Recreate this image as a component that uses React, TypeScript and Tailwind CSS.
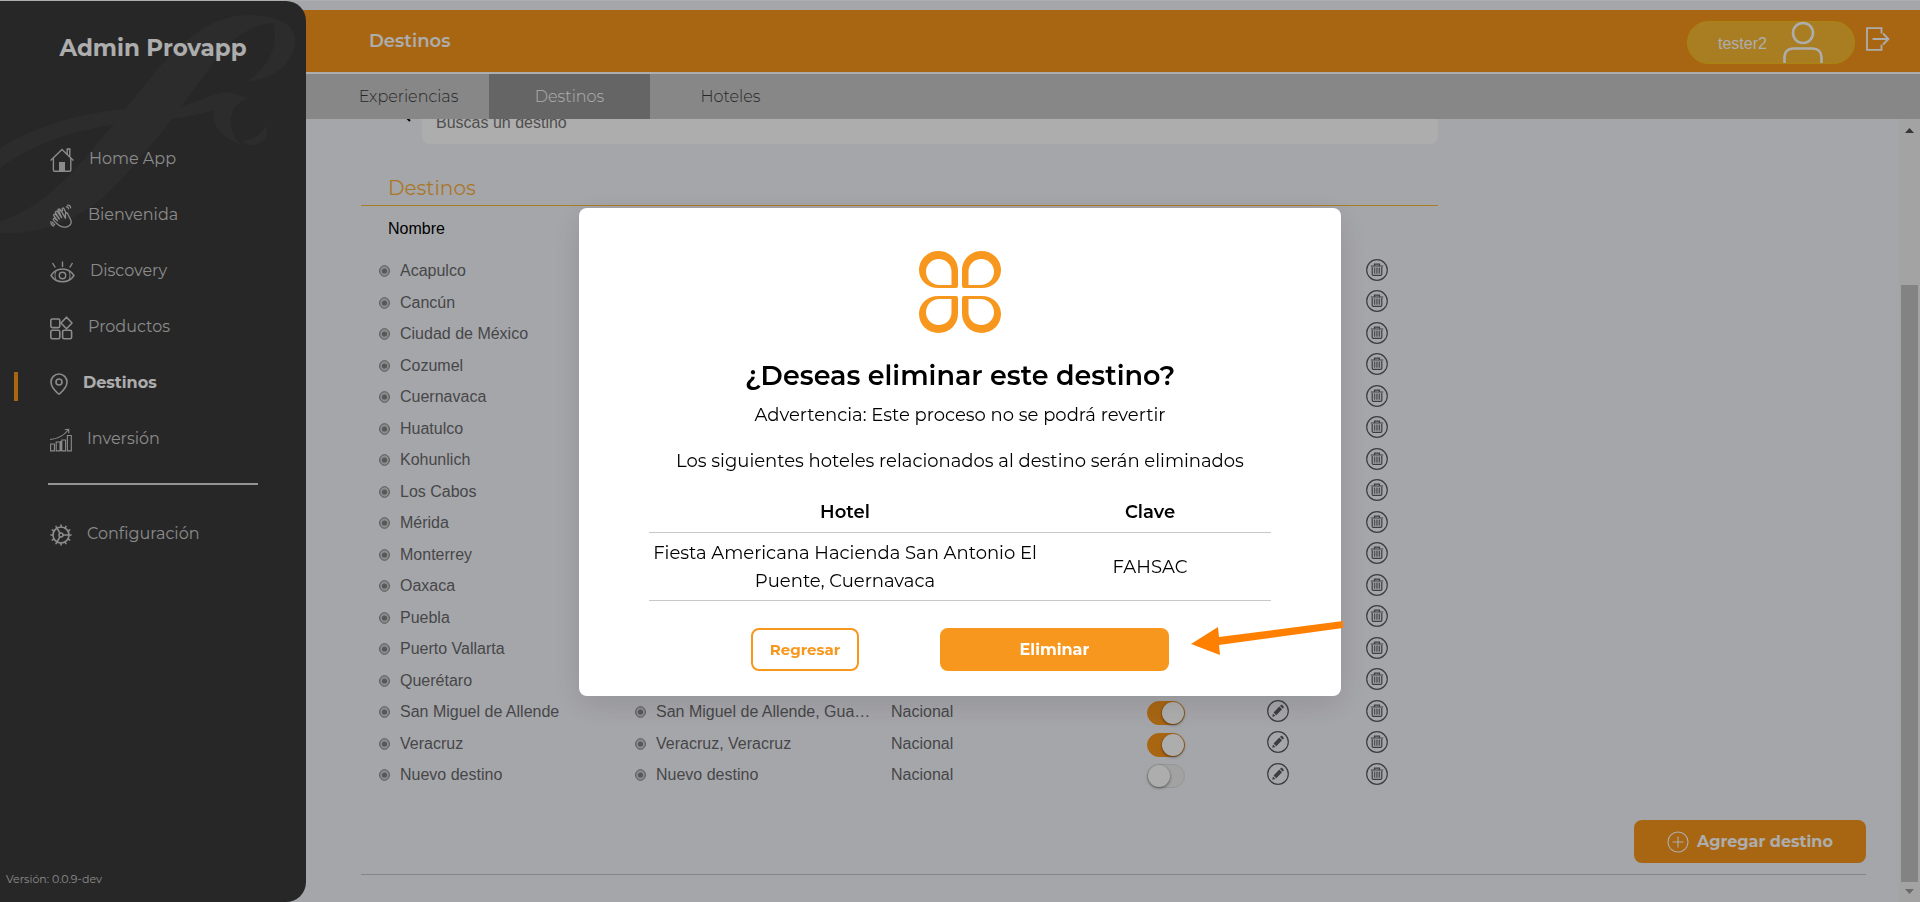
import { useState } from "react";
import { Cog, MapPin } from "lucide-react";

const HomeIcon = () => (
  <svg width="24" height="24" viewBox="0 0 24 24" fill="none" stroke="currentColor" strokeWidth="1.4">
    <path d="M.6 12.4 12 1.4l11.4 11" />
    <path d="M17.2 6.2V1h2.6v7.6" />
    <path d="M3.4 10v12c0 .8.4 1.2 1.2 1.2h15c.8 0 1.2-.4 1.2-1.2V10" />
    <path d="M9 14h6v9H9z" fill="currentColor" stroke="none" />
  </svg>
);

const HandIcon = () => (
  <svg width="23" height="24" viewBox="0 0 23 24" fill="none" stroke="currentColor" strokeWidth="1.3" strokeLinejoin="round" strokeLinecap="round">
    <path d="M8.500 21C6.500 19.500 4.800 17.800 3.600 16c-.8-1.400.8-2.300 1.700-1.300l2.200 2.200-3.500-4.900c-.9-1.400.8-2.500 1.800-1.300l3.600 4.300-3.700-5.900c-.8-1.400 1-2.500 1.900-1.200l4 5.700-2.600-6c-.7-1.500 1.200-2.400 2-1l4.400 7.600c.3-1.500-.3-3.500.2-4.700.5-1.100 2.100-.9 2.300.5.300 2.200 3.300 4.800 3.300 8C21.200 22.500 14 25.200 8.500 21z" />
    <path d="M9.200 9.200 8 6.400c-.4-1.400 1.200-2.100 1.900-.9l1 1.800M12.600 6.800l-.5-1.600c-.2-1.300 1.300-1.700 1.900-.5l2.200 4.500" />
    <path d="M16.400 2.800c1-.2 2 .7 2.100 1.900M17.600 1.100c1.700-.2 2.900 1 3 2.700" />
    <path d="M2.600 18.200c.2 1.300.9 2.100 2 2.500M1 17.600c-.2 2.400.9 3.900 2.800 4.500" />
  </svg>
);

const EyeIcon = () => (
  <svg width="25" height="24" viewBox="0 0 25 24" fill="none" stroke="currentColor" strokeWidth="1.4">
    <path d="M1 15.500C4 10.800 8 9 12.500 9s8.500 1.800 11.500 6.500c-3 4.700-7 6.300-11.500 6.300S4 20.200 1 15.500z" />
    <path d="M6.500 10.500c-2 3-2 7 0 10M18.500 10.500c2 3 2 7 0 10" strokeWidth="1" />
    <circle cx="12.500" cy="15.500" r="3.200" />
    <path d="M12.500 1.500v5.500M2.500 3l2.800 4.500M22.500 3l-2.800 4.500" />
  </svg>
);

const GridIcon = () => (
  <svg width="23" height="24" viewBox="0 0 23 24" fill="none" stroke="currentColor" strokeWidth="1.600">
    <rect x=".8" y="3" width="9" height="8.600" rx="1.500" />
    <rect x=".8" y="14.200" width="9" height="8.600" rx="1.500" />
    <rect x="12.600" y="14.200" width="9" height="8.600" rx="1.500" />
    <path d="M16.500 1.200 22 7l-5.500 5.800L11 7z" strokeLinejoin="round" />
  </svg>
);

const ChartIcon = () => (
  <svg width="22" height="24" viewBox="0 0 22 24" fill="none" stroke="currentColor" strokeWidth="1.100">
    <path d="M.6 16h3.800v6.900H.6zM6.200 14H10v8.900H6.200zM11.800 12h3.800v10.900h-3.800zM17.400 7.500h3.900v15.400h-3.900z" />
    <path d="M11 13v10" strokeWidth="2" />
    <path d="M0 11.500c8-.5 13.500-3.500 18.200-9.500M14.800 1.700l3.900-.4.100 3.900" />
  </svg>
);

const menu = [
  { label: "Home App", icon: <HomeIcon /> },
  { label: "Bienvenida", icon: <HandIcon /> },
  { label: "Discovery", icon: <EyeIcon /> },
  { label: "Productos", icon: <GridIcon /> },
  { label: "Destinos", icon: <svg width="18" height="24" viewBox="3 1 18 22"><MapPin size={24} strokeWidth={1.6} /></svg>, active: true },
  { label: "Inversión", icon: <ChartIcon /> },
];

const tabs = ["Experiencias", "Destinos", "Hoteles"];

const destinos = [
  { nombre: "Acapulco", activo: true },
  { nombre: "Cancún", activo: true },
  { nombre: "Ciudad de México", activo: true },
  { nombre: "Cozumel", activo: true },
  { nombre: "Cuernavaca", activo: true },
  { nombre: "Huatulco", activo: true },
  { nombre: "Kohunlich", activo: true },
  { nombre: "Los Cabos", activo: true },
  { nombre: "Mérida", activo: true },
  { nombre: "Monterrey", activo: true },
  { nombre: "Oaxaca", activo: true },
  { nombre: "Puebla", activo: true },
  { nombre: "Puerto Vallarta", activo: true },
  { nombre: "Querétaro", activo: true },
  { nombre: "San Miguel de Allende", lugar: "San Miguel de Allende, Gua…", tipo: "Nacional", activo: true },
  { nombre: "Veracruz", lugar: "Veracruz, Veracruz", tipo: "Nacional", activo: true },
  { nombre: "Nuevo destino", lugar: "Nuevo destino", tipo: "Nacional", activo: false },
];

const Bullet = () => (
  <svg className="mr-2.5 shrink-0" width="11" height="12" viewBox="0 0 11 12">
    <ellipse cx="5.500" cy="6" rx="4.900" ry="5.300" fill="#cfcfd2" stroke="#7d7d7f" />
    <circle cx="5.500" cy="6" r="2.600" fill="#828284" />
  </svg>
);

const PencilIcon = () => (
  <svg width="22" height="22" viewBox="0 0 22 22" fill="none" stroke="currentColor">
    <circle cx="11" cy="11" r="10.300" strokeWidth="1.200" />
    <g fill="currentColor" stroke="none">
      <path d="m6.600 12.600 5.700-6 2.700 2.700-5.700 6z" />
      <path d="m13 5.900.9-.9c.4-.4.900-.4 1.300 0l1.400 1.400c.4.400.4.900 0 1.300l-.9.900z" />
      <path d="m6 13.400 2.500 2.500-3.200.9z" />
    </g>
  </svg>
);

const TrashIcon = () => (
  <svg width="22" height="22" viewBox="0 0 22 22" fill="none" stroke="currentColor">
    <circle cx="11" cy="11" r="10.300" strokeWidth="1.200" />
    <path d="M4.800 7h12.400M8.500 6.800V5.200h5v1.600" strokeWidth="1.200" />
    <path d="M6.200 8v7.200c0 .7.400 1.100 1.100 1.100h7.400c.7 0 1.100-.4 1.100-1.100V8" strokeWidth="1.200" />
    <path d="M8.400 8.500v6.200M10.200 8.500v6.200M11.900 8.500v6.200M13.600 8.500v6.200" strokeWidth=".9" />
  </svg>
);

const Petal = ({ transform }: { transform?: string }) => (
  <path
    transform={transform}
    fillRule="evenodd"
    d="M19.500 0C30.500 0 39 8.500 39 19.500V35a2 2 0 0 1-2 2H19.500C8.500 37 0 29.500 0 19 0 8.500 8.500 0 19.500 0zM19.500 8C13 8 7 13.500 7 20.500 7 28.500 13 34 20.500 34H32.500V20.500C32.500 13.500 27 8 19.500 8z"
  />
);

function Sidebar() {
  return (
    <aside className="relative z-10 flex w-[306px] shrink-0 flex-col overflow-hidden rounded-r-[20px] bg-[#3a3a3a] text-[#cdcdcd]">
      <svg className="absolute left-0 top-0" width="306" height="240" viewBox="0 0 306 240" fill="#424242" aria-hidden="true">
        <path d="M0 221C58 200 92 148 125 109C158 68 194 14 250 14C278 15 295 24 295 38C295 62 274 79 247 80C268 68 280 44 273 22C246 24 226 42 206 72C180 106 150 150 110 190C72 226 32 233 0 232z" />
        <path d="M0 147C40 123 82 112 126 108L112 124C68 130 28 146 0 167z" />
        <path d="M177 106C200 101 214 92 228 91L248 97C226 104 226 132 241 143C222 138 211 124 214 109C200 113 184 117 166 118z" />
        <path d="M241 140C255 139 263 132 266 124C270 136 262 145 250 144z" />
      </svg>
      <h1 className="relative mt-[27px] text-center text-[23px] leading-10 font-bold text-white">Admin Provapp</h1>
      <nav className="relative mt-[63px] flex flex-col">
        {menu.map((item) => (
          <a key={item.label} href="#" className="relative flex h-14 items-center gap-[15px] pl-[50px]">
            {item.active && <span className="absolute left-[14px] top-[17px] h-[29px] w-1 bg-[#f8971d]" />}
            <span className="pt-0.5">{item.icon}</span>
            <span className={item.active ? "pb-px text-[16px] font-bold text-white" : "pb-px text-[16px]"}>{item.label}</span>
          </a>
        ))}
        <hr className="mt-4 mr-12 ml-12 border-t-2 border-[#dcdcdc]" />
        <a href="#" className="mt-[21px] flex h-14 items-center gap-3.5 pl-[49px]">
          <span className="pt-0.5"><Cog size={24} strokeWidth={1.6} /></span>
          <span className="text-[16px]">Configuración</span>
        </a>
      </nav>
      <p className="mt-auto pb-[15px] pl-[6px] text-[11px] leading-4">Versión: 0.0.9-dev</p>
    </aside>
  );
}

function Header() {
  return (
    <header className="flex h-[62px] shrink-0 items-center bg-[#f8971d] pr-[30px] pl-[83px] text-white">
      <h2 className="flex-1 text-[18px] font-semibold">Destinos</h2>
      <button className="mt-0.5 flex h-[43px] w-[168px] items-center gap-4 rounded-full border border-[#f8c516] bg-[#fab932] pl-[30px] font-['Liberation_Sans',sans-serif] text-[16px]">
        <span className="pt-1">tester2</span>
        <svg width="40" height="42" viewBox="0 0 40 42" fill="none" stroke="currentColor" strokeWidth="2.600">
          <circle cx="20" cy="12" r="10" />
          <path d="M1.500 42v-5.500c0-5.500 3.500-9 9-9h19c5.500 0 9 3.500 9 9V42" />
        </svg>
      </button>
      <button className="ml-[11px] pb-1" aria-label="Salir">
        <svg width="24" height="24" viewBox="0 0 24 24" fill="none" stroke="currentColor" strokeWidth="1.800">
          <path d="M15.500 6.500V1.200H1v21.600h14.500v-5" />
          <path d="M6.500 12H23M17 6.500l5.500 5.500-5.500 5.500" />
        </svg>
      </button>
    </header>
  );
}

function DestinosTable() {
  return (
    <table className="h-[586px] w-full table-fixed border-t border-[#fab932] text-left font-['Liberation_Sans',sans-serif] text-[16px] leading-5 text-[#69696b]">
      <colgroup>
        <col className="w-[256px]" />
        <col className="w-[256px]" />
        <col className="w-[234px]" />
        <col className="w-[118px]" />
        <col className="w-[106px]" />
        <col className="w-[107px]" />
      </colgroup>
      <thead>
        <tr className="h-[50px]">
          <th className="pb-[3px] pl-[27px] font-normal text-black">Nombre</th>
          <th colSpan={5} />
        </tr>
      </thead>
      <tbody>
        {destinos.map((d) => (
          <tr key={d.nombre}>
            <td className="p-0 pl-[18px]">
              <div className="flex items-center">
                <Bullet />
                {d.nombre}
              </div>
            </td>
            <td className="p-0 pl-[18px]">
              <div className="flex items-center">
                <Bullet />
                {d.lugar}
              </div>
            </td>
            <td className="p-0 pl-[18px]">{d.tipo}</td>
            <td className="p-0">
              <input
                type="checkbox"
                role="switch"
                defaultChecked={d.activo}
                aria-label={`Activar ${d.nombre}`}
                className="relative mx-auto mt-0.5 block h-6 w-[38px] appearance-none rounded-full border border-[#dedede] bg-[#efefef] before:absolute before:top-0 before:left-0 before:size-[22px] before:rounded-full before:bg-white before:shadow-[0_1px_3px_rgba(0,0,0,0.5)] checked:border-[#f8971d] checked:bg-[#f8971d] checked:before:left-[14px]"
              />
            </td>
            <td className="p-0 text-[#5a5a5c]">
              <button className="mx-auto mb-[3px] block" aria-label={`Editar ${d.nombre}`}><PencilIcon /></button>
            </td>
            <td className="p-0 pr-[15px] text-[#5a5a5c]">
              <button className="mx-auto mb-[3px] block" aria-label={`Borrar ${d.nombre}`}><TrashIcon /></button>
            </td>
          </tr>
        ))}
      </tbody>
    </table>
  );
}

function DeleteModal() {
  return (
    <div className="fixed inset-0 z-20 flex items-center justify-center bg-black/32 pt-0.5">
      <div role="dialog" aria-modal="true" aria-labelledby="modal-title" className="relative flex w-[762px] flex-col items-center rounded-lg bg-white px-[70px] pt-[43px] pb-[25px] text-[18px] leading-7 text-black shadow-[0_8px_32px_rgba(0,0,0,0.12)]">
        <svg width="82" height="82" viewBox="0 0 82 82" fill="#f8971d" aria-hidden="true">
          <Petal />
          <Petal transform="matrix(-1 0 0 1 82 0)" />
          <Petal transform="matrix(1 0 0 -1 0 82)" />
          <Petal transform="matrix(-1 0 0 -1 82 82)" />
        </svg>
        <h2 id="modal-title" className="mt-[25px] text-[27px] leading-9 font-semibold">¿Deseas eliminar este destino?</h2>
        <p className="mt-[7px]">Advertencia: Este proceso no se podrá revertir</p>
        <p className="mt-[18px]">Los siguientes hoteles relacionados al destino serán eliminados</p>
        <table className="mt-[17px] w-full table-fixed text-center">
          <thead>
            <tr className="h-10 border-b border-[#c8c8c8]">
              <th className="w-[392px] p-0 font-semibold">Hotel</th>
              <th className="p-0 pr-3 font-semibold">Clave</th>
            </tr>
          </thead>
          <tbody>
            <tr className="h-[68px] border-b border-[#c8c8c8]">
              <td className="p-0 pt-0.5">Fiesta Americana Hacienda San Antonio El Puente, Cuernavaca</td>
              <td className="p-0 pt-0.5 pr-3">FAHSAC</td>
            </tr>
          </tbody>
        </table>
        <div className="mt-[27px] flex gap-[81px]">
          <button className="h-[43px] w-[108px] rounded-lg border-2 border-[#f8971d] pt-0.5 text-[15px] font-bold text-[#f8971d]">Regresar</button>
          <button className="h-[43px] w-[229px] rounded-lg bg-[#f8971d] pt-0.5 text-[16px] font-bold text-white">Eliminar</button>
        </div>
        <svg className="absolute -right-0.5 bottom-10" width="153" height="36" viewBox="0 0 153 36" fill="#ff8000" aria-hidden="true">
          <path d="M1 24 28 7l1 10L153 1v7L29 25l1 10z" />
        </svg>
      </div>
    </div>
  );
}

export default function App() {
  const [tab, setTab] = useState("Destinos");

  return (
    <div className="flex h-screen overflow-hidden border-t border-white bg-[#f4f5fb] font-[Montserrat,Inter,sans-serif]">
      <Sidebar />
      <main className="-ml-5 flex min-w-0 flex-1 flex-col pt-[9px]">
        <Header />
        <div className="flex h-[47px] shrink-0 border-t-2 border-white bg-[#c7c7c7] pl-[42px]">
          {tabs.map((t) => (
            <button
              key={t}
              onClick={() => setTab(t)}
              className={t === tab ? "w-[161px] bg-[#959595] text-[16px] font-light text-white" : "w-[161px] text-[16px] font-light text-[#3a3a3a]"}
            >
              {t}
            </button>
          ))}
        </div>

        <div className="flex min-h-0 flex-1">
          <div className="flex min-w-0 flex-1 flex-col justify-end overflow-hidden pr-[33px] pb-[27px] pl-[75px]">
            <div className="w-full max-w-[1077px]">
              <label className="flex items-start">
                <svg className="mt-0.5 mr-[11px] ml-[31px]" width="19" height="19" viewBox="0 0 19 19" fill="none" stroke="#000" strokeWidth="2">
                  <circle cx="8" cy="8" r="6" />
                  <path d="m12.500 12.500 5.500 5.500" />
                </svg>
                <input
                  type="text"
                  placeholder="Buscas un destino"
                  className="h-[43px] flex-1 rounded-lg bg-white px-3.5 font-['Liberation_Sans',sans-serif] text-[16px] placeholder:text-[#757575]"
                />
              </label>
              <h3 className="mt-[30px] pb-[3px] pl-[27px] text-[20px] leading-7 text-[#fab03c]">Destinos</h3>
              <DestinosTable />
            </div>
            <button className="mt-[29px] flex h-[43px] w-[232px] shrink-0 items-center justify-center gap-2 self-end rounded-lg bg-[#f8971d] text-[16px] font-bold text-white">
              <svg width="22" height="22" viewBox="0 0 22 22" fill="none" stroke="currentColor" strokeWidth="1.100">
                <circle cx="11" cy="11" r="10" />
                <path d="M11 5.500v11M5.500 11h11" />
              </svg>
              Agregar destino
            </button>
            <hr className="mt-[11px] border-[#c3c3c3]" />
          </div>

          <div className="flex w-[21px] shrink-0 flex-col items-center bg-[#f1f1f1]" aria-hidden="true">
            <svg className="mt-[9px]" width="9" height="5" viewBox="0 0 9 5" fill="#505050"><path d="M0 5 4.500 0 9 5z" /></svg>
            <div className="mt-[152px] w-[17px] flex-1 bg-[#c1c1c1]" />
            <svg className="mt-[7px] mb-2" width="9" height="5" viewBox="0 0 9 5" fill="#9c9c9c"><path d="M0 0h9L4.500 5z" /></svg>
          </div>
        </div>
      </main>
      <DeleteModal />
    </div>
  );
}
